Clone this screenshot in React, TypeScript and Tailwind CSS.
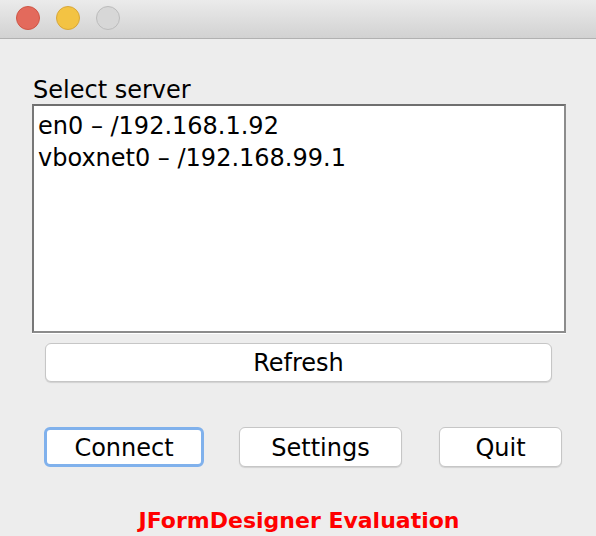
export default function App() {
  const font = { fontFamily: '"DejaVu Sans", "Liberation Sans", sans-serif' };
  return (
    <div
      className="flex h-[536px] w-[596px] flex-col overflow-hidden bg-[#ededed] text-black"
      style={font}
    >
      {/* title bar */}
      <div className="flex h-[39px] shrink-0 items-start gap-[16px] border-b border-[#b1b1b1] bg-gradient-to-b from-[#ebebeb] to-[#d2d2d2] pl-[16px] pt-[6px]">
        <div className="h-[24px] w-[24px] rounded-full border border-[#cf5646] bg-[#e36a5c]" />
        <div className="h-[24px] w-[24px] rounded-full border border-[#d8a73a] bg-[#f3c343]" />
        <div className="h-[24px] w-[24px] rounded-full border border-[#bcbcbc] bg-[#d7d7d7]" />
      </div>

      <div className="mt-[37px] pl-[33px] text-[24px] leading-[28px]">Select server</div>

      <div className="ml-[32px] h-[229px] w-[534px] border-2 border-[#8c8c8c] border-l-[#777] border-t-[#6f6f6f] bg-white pl-[4px] pt-[4px] text-[24px] leading-[32px] shadow-[0_1px_0_#ffffff]">
        <div>en0 – /192.168.1.92</div>
        <div>vboxnet0 – /192.168.99.1</div>
      </div>

      <button
        type="button"
        className="ml-[45px] mt-[10px] h-[39px] w-[507px] rounded-[6px] border border-[#c6c6c6] bg-white pt-[1px] text-[24px] leading-[28px] shadow-[0_1px_1px_rgba(0,0,0,0.12)]"
      >
        Refresh
      </button>

      <div className="mt-[45px] flex items-start pl-[44px]">
        <button
          type="button"
          className="h-[40px] w-[160px] rounded-[6px] border-[3px] border-[#80b1ec] bg-white pt-[1px] text-[24px] leading-[28px]"
        >
          Connect
        </button>
        <button
          type="button"
          className="ml-[35px] h-[40px] w-[163px] rounded-[6px] border border-[#c6c6c6] bg-white pt-[1px] text-[24px] leading-[28px] shadow-[0_1px_1px_rgba(0,0,0,0.12)]"
        >
          Settings
        </button>
        <button
          type="button"
          className="ml-[37px] h-[40px] w-[123px] rounded-[6px] border border-[#c6c6c6] bg-white pt-[1px] text-[24px] leading-[28px] shadow-[0_1px_1px_rgba(0,0,0,0.12)]"
        >
          Quit
        </button>
      </div>

      <div className="mt-[41px] pl-[2px] text-center text-[22px] font-bold leading-[26px] text-[#ff0000]">
        JFormDesigner Evaluation
      </div>
    </div>
  );
}
